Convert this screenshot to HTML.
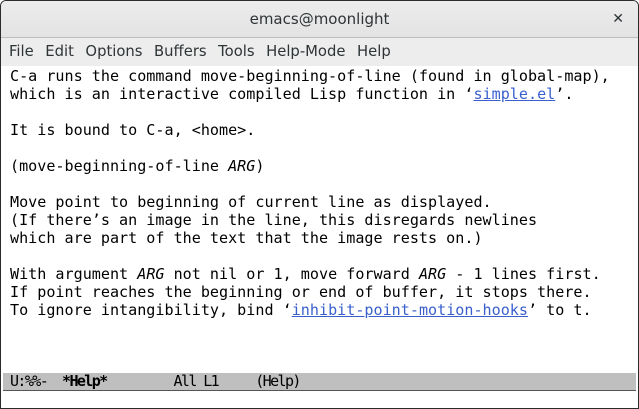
<!DOCTYPE html>
<html><head><meta charset="utf-8"><style>
*{margin:0;padding:0;box-sizing:border-box}
body{width:639px;height:409px;overflow:hidden;background:#fff;position:relative;font-family:"DejaVu Sans Mono",monospace}
.win{position:absolute;left:0;top:0;width:639px;height:409px;border:1px solid #2b2b2b;border-radius:6px 6px 0 0;overflow:hidden;background:#fff}
.title{position:absolute;left:0;top:0;width:637px;height:37px;background:linear-gradient(#ececec,#e3e3e3);border-bottom:1px solid #bdbdbd;text-align:center;font:15px "DejaVu Sans","Liberation Sans",sans-serif;line-height:37px;color:#2e3436}
.close{position:absolute;right:14px;top:0;font:bold 14px "DejaVu Sans",sans-serif;line-height:37px;color:#2e3436}
.menu{position:absolute;left:0;top:37px;width:637px;height:28px;background:#ededed;font:14.8px "DejaVu Sans","Liberation Sans",sans-serif;line-height:28px;color:#2e3436;padding-left:8px}
.menu span{margin-right:11.5px}
.text{position:absolute;left:9px;top:66px;font-size:15.1px;line-height:18px;white-space:pre;color:#000}
a{color:#3a5fcd;text-decoration:underline}
i{font-style:oblique}
.mode{position:absolute;left:2px;top:372px;width:633px;height:18px;background:#bfbfbf;border-bottom:1px solid #555;font-size:15px;letter-spacing:-1.6px;line-height:17px;white-space:pre;padding-left:7px;color:#000}
</style></head><body><div class="win">
<div class="title">emacs@moonlight<span class="close">✕</span></div>
<div class="menu"><span>File</span><span>Edit</span><span>Options</span><span>Buffers</span><span>Tools</span><span>Help-Mode</span><span>Help</span></div>
<div class="text">C-a runs the command move-beginning-of-line (found in global-map),
which is an interactive compiled Lisp function in ‘<a>simple.el</a>’.

It is bound to C-a, &lt;home&gt;.

(move-beginning-of-line <i>ARG</i>)

Move point to beginning of current line as displayed.
(If there’s an image in the line, this disregards newlines
which are part of the text that the image rests on.)

With argument <i>ARG</i> not nil or 1, move forward <i>ARG</i> - 1 lines first.
If point reaches the beginning or end of buffer, it stops there.
To ignore intangibility, bind ‘<a>inhibit-point-motion-hooks</a>’ to t.</div>
<div class="mode">U:%%-  <b>*Help*</b>         All L1     (Help)</div>
</div></body></html>
